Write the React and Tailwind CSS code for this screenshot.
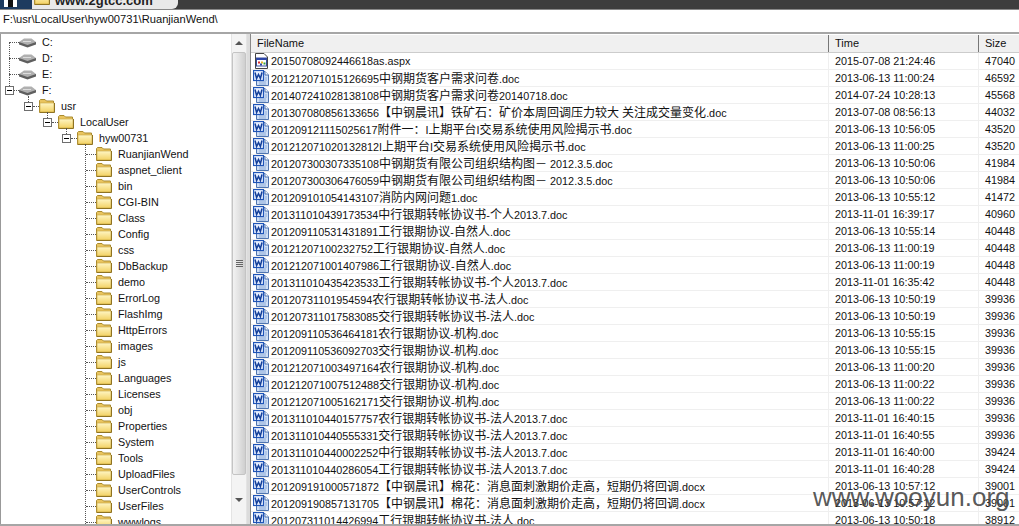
const files = [
  ["20150708092446618as.aspx", "2015-07-08 21:24:46", "47040", "aspx"],
  ["201212071015126695中钢期货客户需求问卷.doc", "2013-06-13 11:00:24", "46592"],
  ["201407241028138108中钢期货客户需求问卷20140718.doc", "2014-07-24 10:28:13", "45568"],
  ["201307080856133656【中钢晨讯】铁矿石：矿价本周回调压力较大 关注成交量变化.doc", "2013-07-08 08:56:13", "44032"],
  ["201209121115025617附件一：I上期平台I交易系统使用风险揭示书.doc", "2013-06-13 10:56:05", "43520"],
  ["201212071020132812I上期平台I交易系统使用风险揭示书.doc", "2013-06-13 11:00:25", "43520"],
  ["201207300307335108中钢期货有限公司组织结构图－ 2012.3.5.doc", "2013-06-13 10:50:06", "41984"],
  ["201207300306476059中钢期货有限公司组织结构图－ 2012.3.5.doc", "2013-06-13 10:50:06", "41984"],
  ["201209101054143107消防内网问题1.doc", "2013-06-13 10:55:12", "41472"],
  ["201311010439173534中行银期转帐协议书-个人2013.7.doc", "2013-11-01 16:39:17", "40960"],
  ["201209110531431891工行银期协议-自然人.doc", "2013-06-13 10:55:14", "40448"],
  ["20121207100232752工行银期协议-自然人.doc", "2013-06-13 11:00:19", "40448"],
  ["201212071001407986工行银期协议-自然人.doc", "2013-06-13 11:00:19", "40448"],
  ["201311010435423533工行银期转帐协议书-个人2013.7.doc", "2013-11-01 16:35:42", "40448"],
  ["20120731101954594农行银期转帐协议书-法人.doc", "2013-06-13 10:50:19", "39936"],
  ["201207311017583085交行银期转帐协议书-法人.doc", "2013-06-13 10:50:19", "39936"],
  ["201209110536464181农行银期协议-机构.doc", "2013-06-13 10:55:15", "39936"],
  ["201209110536092703交行银期协议-机构.doc", "2013-06-13 10:55:15", "39936"],
  ["201212071003497164农行银期协议-机构.doc", "2013-06-13 11:00:20", "39936"],
  ["201212071007512488交行银期协议-机构.doc", "2013-06-13 11:00:22", "39936"],
  ["201212071005162171交行银期协议-机构.doc", "2013-06-13 11:00:22", "39936"],
  ["201311010440157757农行银期转帐协议书-法人2013.7.doc", "2013-11-01 16:40:15", "39936"],
  ["201311010440555331交行银期转帐协议书-法人2013.7.doc", "2013-11-01 16:40:55", "39936"],
  ["201311010440002252中行银期转帐协议书-法人2013.7.doc", "2013-11-01 16:40:00", "39424"],
  ["201311010440286054工行银期转帐协议书-法人2013.7.doc", "2013-11-01 16:40:28", "39424"],
  ["201209191000571872【中钢晨讯】棉花：消息面刺激期价走高，短期仍将回调.docx", "2013-06-13 10:57:12", "39001"],
  ["201209190857131705【中钢晨讯】棉花：消息面刺激期价走高，短期仍将回调.docx", "2013-06-13 10:57:12", "39001"],
  ["201207311014426994工行银期转帐协议书-法人.doc", "2013-06-13 10:50:18", "38912"],
];

const folders = [
  "RuanjianWend", "aspnet_client", "bin", "CGI-BIN", "Class", "Config", "css", "DbBackup",
  "demo", "ErrorLog", "FlashImg", "HttpErrors", "images", "js", "Languages", "Licenses",
  "obj", "Properties", "System", "Tools", "UploadFiles", "UserControls", "UserFiles", "wwwlogs",
];

function WordIcon() {
  return (
    <svg width="16" height="16" viewBox="0 0 16 16" className="shrink-0">
      <path d="M3.5 1.5H12L15.5 5V15.5H3.5Z" fill="#cfdff6" stroke="#4f75b0" />
      <path d="M12 1.5V5H15.5" fill="#fff" stroke="#4f75b0" />
      <path d="M6 12H13M6 14H13M12 8H14M12 10H14" stroke="#8fadd8" />
      <rect x=".5" y=".5" width="10" height="10" fill="#e6efff" stroke="#1f55b8" strokeWidth="1.2" />
      <path d="M2 2.5L3.6 8.5L5.5 4.5L7.4 8.5L9 2.5" fill="none" stroke="#133f9a" strokeWidth="1.5" />
    </svg>
  );
}

function AspxIcon() {
  return (
    <svg width="16" height="16" viewBox="0 0 16 16" className="shrink-0">
      <path d="M2.5 .5H11L14.5 4V15.5H2.5Z" fill="#fff" stroke="#444" />
      <rect x="3.5" y="5" width="10" height="8" fill="#fff" stroke="#3a4f9c" />
      <rect x="3.5" y="5" width="10" height="2" fill="#2d46a8" />
      <rect x="5" y="8.5" width="2" height="2" fill="#d92b2b" />
      <rect x="8" y="8.5" width="2" height="2" fill="#e8b923" />
      <rect x="7" y="10.5" width="2" height="2" fill="#2d46a8" />
      <rect x="10.5" y="9.5" width="2" height="2" fill="#3aa33a" />
    </svg>
  );
}

function FolderIcon() {
  return (
    <svg width="16" height="14" viewBox="0 0 16 14" className="shrink-0">
      <defs>
        <linearGradient id="folderFill" x1="0" y1="0" x2="0" y2="1">
          <stop offset="0" stopColor="#fff6c4" />
          <stop offset="1" stopColor="#f3d264" />
        </linearGradient>
      </defs>
      <path d="M.5 3V1.5L1.5 .5H6L7.5 2H14.5V13.5H.5Z" fill="#e9c45e" stroke="#a98a2e" />
      <rect x="1" y="4" width="14" height="9" fill="url(#folderFill)" stroke="#c2a03f" strokeWidth=".6" />
      <path d="M1 13.5H15.5V4" fill="none" stroke="#8f7322" />
    </svg>
  );
}

function DriveIcon() {
  return (
    <svg width="17" height="11" viewBox="0 0 17 11" className="shrink-0">
      <path d="M0 5V7.5L8.5 10.5L17 7.5V5Z" fill="#5f5f5f" />
      <path d="M0 5L5 1.5H12.5L17 5L8.5 8Z" fill="#b0b0b0" />
      <path d="M4 4.5H12" stroke="#dcdcdc" />
    </svg>
  );
}

function ToggleBox() {
  return (
    <span className="flex w-[9px] h-[9px] shrink-0 items-center justify-center border border-[#6e6e6e] bg-white">
      <span className="w-[5px] h-px bg-black" />
    </span>
  );
}

function TreeRow({ indent, box, icon, label, conn = "w-[6px]" }) {
  return (
    <div className={`flex h-4 items-center ${indent}`}>
      {box && <ToggleBox />}
      <span className={`shrink-0 border-t border-dotted border-[#555] ${box ? conn : "w-[10px]"}`} />
      {icon}
      <span className="ml-[6px] whitespace-nowrap">{label}</span>
    </div>
  );
}

// latin digits are narrower than the 12px cjk glyphs, so runs get their own size
function FileName({ name }) {
  const parts = name.match(/[\x20-\x7e]+|[^\x20-\x7e]+/g);
  return (
    <span className="whitespace-nowrap">
      {parts.map((p, i) =>
        /^[\x20-\x7e]/.test(p) ? (
          <span key={i}>{p}</span>
        ) : (
          <span key={i} className="text-[12px] font-['Noto_Sans_CJK_SC',sans-serif]">{p}</span>
        )
      )}
    </span>
  );
}

function Tree() {
  return (
    <div className="relative flex-1 overflow-hidden">
      <span className="absolute left-[9px] top-[8px] h-[44px] border-l border-dotted border-[#555]" />
      <span className="absolute left-[28px] top-[62px] h-[6px] border-l border-dotted border-[#555]" />
      <span className="absolute left-[47px] top-[78px] h-[6px] border-l border-dotted border-[#555]" />
      <span className="absolute left-[66px] top-[94px] h-[6px] border-l border-dotted border-[#555]" />
      <span className="absolute left-[85px] top-[110px] h-[400px] border-l border-dotted border-[#555]" />
      <TreeRow indent="pl-[9px]" icon={<DriveIcon />} label="C:" />
      <TreeRow indent="pl-[9px]" icon={<DriveIcon />} label="D:" />
      <TreeRow indent="pl-[9px]" icon={<DriveIcon />} label="E:" />
      <TreeRow indent="pl-[5px]" box conn="w-[5px]" icon={<DriveIcon />} label="F:" />
      <TreeRow indent="pl-[24px]" box icon={<FolderIcon />} label="usr" />
      <TreeRow indent="pl-[43px]" box icon={<FolderIcon />} label="LocalUser" />
      <TreeRow indent="pl-[62px]" box icon={<FolderIcon />} label="hyw00731" />
      {folders.map((f) => (
        <TreeRow key={f} indent="pl-[86px]" icon={<FolderIcon />} label={f} />
      ))}
    </div>
  );
}

function Scrollbar() {
  return (
    <div className="flex w-4 shrink-0 flex-col items-center bg-[#f4f4f4] border-x border-[#e4e4e4]">
      <div className="flex h-[18px] shrink-0 items-center justify-center">
        <span className="border-x-[4px] border-b-[4px] border-x-transparent border-b-[#555]" />
      </div>
      <div className="flex h-[423px] w-[14px] shrink-0 items-center justify-center rounded-[2px] border border-[#c4c4c4] bg-gradient-to-r from-[#f2f2f2] via-[#e2e2e2] to-[#cfcfcf]">
        <div className="flex flex-col gap-px">
          <span className="h-px w-[7px] bg-[#666]" />
          <span className="h-px w-[7px] bg-[#666]" />
          <span className="h-px w-[7px] bg-[#666]" />
          <span className="h-px w-[7px] bg-[#666]" />
        </div>
      </div>
      <div className="flex flex-1 items-center justify-center">
        <span className="border-x-[4px] border-t-[4px] border-x-transparent border-t-[#555]" />
      </div>
    </div>
  );
}

export default function App() {
  return (
    <div className="relative flex h-[526px] w-[1019px] flex-col overflow-hidden bg-white text-[10.8px] text-[#111] font-['Liberation_Sans',sans-serif]">
      <div className="h-[10px] shrink-0 overflow-hidden bg-[#3d3d3d] border-b border-[#888]">
        <div className="flex h-[9px] items-end">
          <div className="flex h-full w-[32px] items-start bg-[#1d3b5f] pl-[4px]">
            <span className="h-[7px] w-[13px] border-x-[4px] border-[#fff] bg-[#111]" />
          </div>
          <div className="flex h-full w-[146px] items-end gap-[5px] rounded-br-md bg-[#e9e9e9] pl-[2px]">
            <div className="mb-[4px] shrink-0"><FolderIcon /></div>
            <span className="text-[13px] font-bold leading-4 text-[#222]">www.2gtcc.com</span>
          </div>
        </div>
      </div>

      <div className="flex h-[22px] shrink-0 items-center pb-[3px] pl-[3px] text-[11.15px]">F:\usr\LocalUser\hyw00731\RuanjianWend\</div>

      <div className="flex min-h-0 flex-1 border-y-2 border-[#a6a6a6]">
        <div className="flex w-[247px] shrink-0 shadow-[inset_1px_0_0_#999]">
          <Tree />
          <Scrollbar />
        </div>
        <div className="w-[3px] shrink-0 bg-[#dcdcdc]" />
        <div className="flex min-w-0 flex-1 flex-col overflow-hidden border-l border-[#888]">
          <div className="mt-[1px] grid h-[18px] shrink-0 grid-cols-[578px_150px_1fr] items-center border-b border-[#ccc] bg-[#f0f0f0] text-[11px]">
            <div className="flex h-full items-center border-r border-[#777] pl-[6px]">FileName</div>
            <div className="flex h-full items-center border-r border-[#777] pl-[6px]">Time</div>
            <div className="pl-[6px]">Size</div>
          </div>
          {files.map(([name, time, size, kind]) => (
            <div key={name} className="grid h-[17px] shrink-0 grid-cols-[578px_150px_1fr] items-center border-b border-[#efefef]">
              <div className="flex h-full items-center gap-[1px] overflow-hidden border-r border-[#efefef] pl-[2px]">
                {kind === "aspx" ? <AspxIcon /> : <WordIcon />}
                <span className="pl-[1px]"><FileName name={name} /></span>
              </div>
              <div className="flex h-full items-center border-r border-[#efefef] pl-[6px]">{time}</div>
              <div className="pl-[6px]">{size}</div>
            </div>
          ))}
        </div>
      </div>

      <span className="absolute left-[813px] top-[482px] text-[26px] leading-[30px] text-[#444]/90">www.wooyun.org</span>
    </div>
  );
}
